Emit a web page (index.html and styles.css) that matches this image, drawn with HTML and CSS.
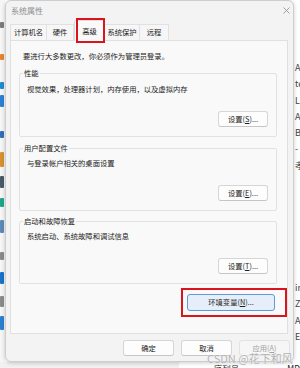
FILE: index.html
```html
<!DOCTYPE html>
<html lang="zh-CN">
<head>
<meta charset="utf-8">
<title>系统属性</title>
<link rel="stylesheet" href="styles.css">
</head>
<body>
<div class="screen">
  <div class="bg-left">
    <i class="ic ic1"></i><i class="ic ic2"></i><i class="ic ic3"></i><i class="ic ic4"></i><i class="ic ic5"></i><i class="ic ic6"></i><i class="ic ic7"></i><i class="ic ic8"></i><i class="ic ic9"></i><i class="ic ic10"></i><i class="ic ic11"></i><i class="ic ic12"></i><i class="ic ic13"></i>
  </div>
  <div class="dialog">
    <div class="titlebar">
      <span class="title">系统属性</span>
      <svg class="close" width="7" height="7" viewBox="0 0 7 7"><path d="M0.5 0.5L6.5 6.5M6.5 0.5L0.5 6.5" stroke="#8c8c8c" stroke-width="0.8" fill="none"/></svg>
    </div>
    <div class="tabs">
      <div class="tab t1">计算机名</div>
      <div class="tab t2">硬件</div>
      <div class="tab active">高级</div>
      <div class="tab t4">系统保护</div>
      <div class="tab t5">远程</div>
    </div>
    <div class="panel">
      <p class="note">要进行大多数更改，你必须作为管理员登录。</p>
      <fieldset class="group g1">
        <legend>性能</legend>
        <div class="group-body">
          <p>视觉效果，处理器计划，内存使用，以及虚拟内存</p>
          <button class="btn">设置(<u>S</u>)...</button>
        </div>
      </fieldset>
      <fieldset class="group g2">
        <legend>用户配置文件</legend>
        <div class="group-body">
          <p>与登录帐户相关的桌面设置</p>
          <button class="btn">设置(<u>E</u>)...</button>
        </div>
      </fieldset>
      <fieldset class="group g3">
        <legend>启动和故障恢复</legend>
        <div class="group-body">
          <p>系统启动、系统故障和调试信息</p>
          <button class="btn">设置(<u>T</u>)...</button>
        </div>
      </fieldset>
      <div class="env-row">
        <div class="mark">
          <button class="btn env">环境变量(<u>N</u>)...</button>
        </div>
      </div>
    </div>
    <div class="footer">
      <button class="btn fbtn">确定</button>
      <button class="btn fbtn">取消</button>
      <button class="btn fbtn disabled">应用(<u>A</u>)</button>
    </div>
    <div class="watermark">CSDN @花下和风</div>
  </div>
  <div class="bg-right">
    <div class="lines l1">
      <span>ARM</span><span>te</span><span>LOC</span><span>AS</span><span>B</span><span>- -</span><span>孝</span>
    </div>
    <div class="lines l2">
      <span>in</span><span>ZH</span><span>A2</span><span>E</span>
    </div>
  </div>
</div>
<div class="bg-bottom">
  <div class="bb-left"></div>
  <div class="bb-text">序列号</div>
  <div class="bb-text bb-md">MD</div>
</div>
</body>
</html>
```

FILE: styles.css
```css
* { box-sizing: border-box; }
html, body { margin: 0; padding: 0; }
body {
  width: 300px;
  height: 368px;
  overflow: hidden;
  background: #ffffff;
  font-family: "Noto Sans CJK SC", "Noto Sans", sans-serif;
  font-size: 7.3px;
  color: #1b1b1b;
  display: flex;
  flex-direction: column;
}
.screen { display: flex; height: 362px; flex: none; }

/* background window strips */
.bg-left {
  width: 5px;
  flex: none;
  background: #f6f6f6;
  display: flex;
  flex-direction: column;
}
.ic { display: block; width: 4px; flex: none; border-radius: 1px; }
.ic1 { margin-top: 22px; height: 6px; background: #7a7a7a; }
.ic2 { margin-top: 26px; height: 6px; background: #e8832a; }
.ic3 { margin-top: 22px; height: 7px; background: #1b8ccf; }
.ic4 { margin-top: 6px; height: 12px; background: #2a7fd4; }
.ic5 { margin-top: 24px; height: 7px; background: #2d6fb8; }
.ic6 { margin-top: 14px; height: 15px; background: #d89030; }
.ic7 { margin-top: 9px; height: 12px; background: #4a5a6a; }
.ic8 { margin-top: 10px; height: 9px; background: #1fa58a; }
.ic9 { margin-top: 13px; height: 13px; background: #5b8ab8; }
.ic10 { margin-top: 19px; height: 8px; background: #8a8a8a; }
.ic11 { margin-top: 12px; height: 12px; background: #1a73c8; }
.ic12 { margin-top: 12px; height: 11px; background: #8a8a8a; }
.ic13 { margin-top: 9px; height: 14px; background: #2b7fd0; }

.bg-right {
  width: 6px;
  flex: none;
  overflow: hidden;
  background: #fff;
  color: #444;
  font-size: 9px;
  display: flex;
  flex-direction: column;
}
.lines { display: flex; flex-direction: column; padding-left: 1px; }
.lines span { display: block; height: 16.3px; line-height: 16.3px; white-space: nowrap; }
.l1 { margin-top: 60px; }
.l2 { margin-top: 106px; }

.bg-bottom {
  height: 6px;
  flex: none;
  display: flex;
  overflow: hidden;
  font-size: 8.5px;
  color: #222;
}
.bb-left { width: 180px; background: #f1f1f1; }
.bb-text { margin-left: 35px; line-height: 10px; padding-top: 1px; white-space: nowrap; }
.bb-md { margin-left: 48px; }

/* dialog */
.dialog {
  position: relative;
  width: 289px;
  height: 362px;
  flex: none;
  background: #f3f3f3;
  border: 1px solid #cdcdcd;
  border-radius: 6px;
  box-shadow: 0 1px 4px rgba(0, 0, 0, 0.2);
  padding: 0 5px 0 4px;
  display: flex;
  flex-direction: column;
}
.titlebar {
  height: 19px;
  flex: none;
  display: flex;
  align-items: center;
  justify-content: space-between;
  padding-left: 1px;
}
.title { font-size: 8px; color: #8e8e8e; line-height: 10px; }
.close { margin-right: -2px; margin-top: -1px; }

.tabs {
  height: 20px;
  flex: none;
  display: flex;
  align-items: flex-end;
}
.tab {
  height: 16px;
  line-height: 15px;
  text-align: center;
  background: #f6f6f6;
  border: 1px solid #e1e1e1;
  border-bottom: none;
  border-left: none;
  color: #1b1b1b;
}
.t1 { width: 37px; border-left: 1px solid #e1e1e1; }
.t2 { width: 27px; }
.t4 { width: 35px; }
.t5 { width: 29px; }
.tab.active {
  position: relative;
  z-index: 1;
  width: 31px;
  height: 21px;
  margin-bottom: -1px;
  line-height: 20px;
  background: #f9f9f9;
  border: 1px solid #dedede;
  border-bottom: none;
  border-radius: 2px 2px 0 0;
}
.tab.active::after {
  content: "";
  position: absolute;
  top: -3px;
  bottom: -2px;
  left: 1px;
  right: -1px;
  border: 2px solid #d9141c;
}

.panel {
  height: 294px;
  flex: none;
  background: #f9f9f9;
  border: 1px solid #e0e0e0;
  padding: 10px 10px 0 8px;
}
.note { margin: 0 0 7px 4px; line-height: 10px; }

.group {
  margin: 0;
  padding: 5px 8px 9px 0;
  border: 1px solid #e2e2e2;
  border-radius: 2px;
  min-width: 0;
}
.g1 { padding-top: 6px; margin-bottom: 6px; }
.g2 { margin-bottom: 5px; }
.group legend {
  margin-left: 3px;
  padding: 0 1px;
  line-height: 10px;
  color: #1b1b1b;
}
.group-body {
  display: flex;
  flex-direction: column;
  margin-left: 7px;
}
.group-body p { margin: 0 0 17px; line-height: 10px; }

.btn {
  font-family: inherit;
  font-size: 7.3px;
  color: #1b1b1b;
  background: #fdfdfd;
  border: 1px solid #d6d6d6;
  border-bottom-color: #c6c6c6;
  border-radius: 3px;
  padding: 0;
  margin: 0;
  line-height: 14px;
  text-align: center;
}
.group-body .btn { align-self: flex-end; width: 50px; height: 16px; }

.env-row {
  display: flex;
  justify-content: flex-end;
  margin: 4px -10px 0 0;
}
.mark {
  border: 2px solid #d9141c;
  padding: 4px 10px 4px 4px;
}
.btn.env {
  display: block;
  width: 88px;
  height: 17px;
  background: #e5eef9;
  border: 1px solid #5f9bd6;
  line-height: 15px;
}

.footer {
  flex: none;
  display: flex;
  justify-content: flex-end;
  gap: 7px;
  padding-top: 6px;
  margin-right: -2px;
}
.fbtn { width: 51px; height: 16px; }
.fbtn.disabled { color: #a2a2a2; background: #f6f6f6; border-color: #e2e2e2; }

.watermark {
  position: absolute;
  left: 201px;
  top: 351px;
  font-size: 11px;
  line-height: 13px;
  color: #b2b2b2;
  white-space: nowrap;
  text-shadow: 0 0 1px #fff;
}
```
